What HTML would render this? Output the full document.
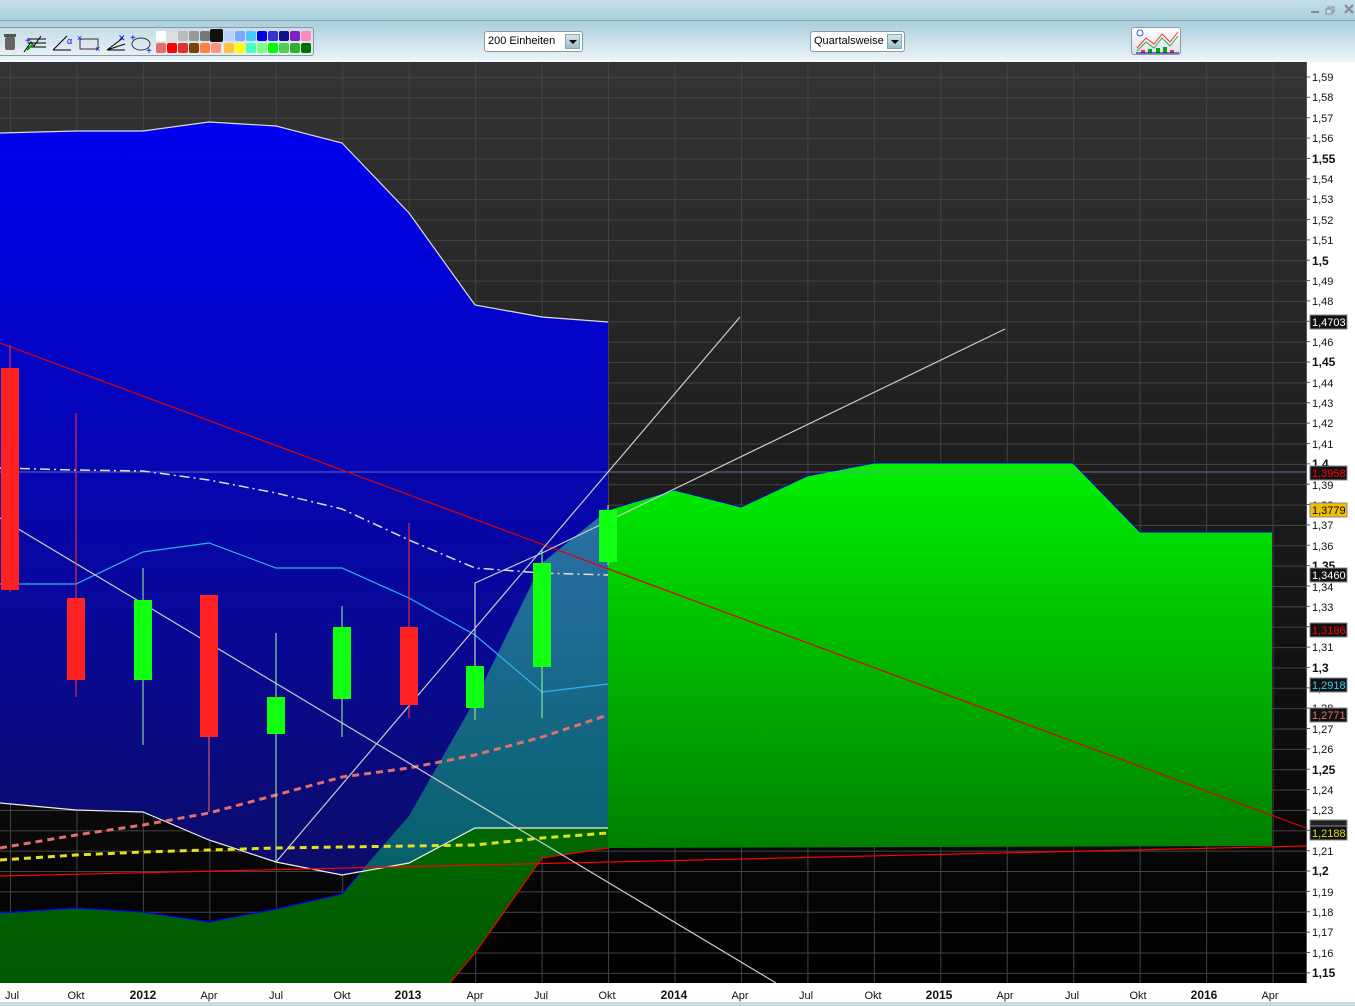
<!DOCTYPE html>
<html><head><meta charset="utf-8"><style>
*{margin:0;padding:0;box-sizing:border-box}
body{width:1355px;height:1006px;overflow:hidden;font-family:"Liberation Sans",Arial,sans-serif;background:#fff;position:relative}
#title{position:absolute;left:0;top:0;width:1355px;height:21px;background:linear-gradient(#c4dfea,#a9cddd);border-bottom:1px solid #8aa;}
#tb{position:absolute;left:0;top:21px;width:1355px;height:41px;background:linear-gradient(#a9cddd,#eef5f8);}
.dd{position:absolute;top:10px;height:21px;background:#fff;border:1px solid #8a9aa4;border-radius:3px;font-size:11px;line-height:19px;padding-left:3px;color:#000}
.dd i{position:absolute;right:2px;top:2px;width:15px;height:15px;background:linear-gradient(#d6e6ee,#9cbccc);border:1px solid #8aa}
.dd i:after{content:"";position:absolute;left:3px;top:5px;border-left:4px solid transparent;border-right:4px solid transparent;border-top:4px solid #000}
#pal{position:absolute;left:-2px;top:6px;width:316px;height:29px;border:1px solid #8a9aa4;border-radius:3px;background:linear-gradient(#c8dde6,#e6eff3)}
.sw{position:absolute;width:10px;height:10px;border-radius:2px}
svg{position:absolute;left:0;top:0}
</style></head><body>
<div id="title"><svg width="1355" height="21"><g fill="#889" stroke="#889"><rect x="1311" y="11" width="8" height="2" stroke="none"/><rect x="1328" y="7" width="6" height="5" fill="none"/><rect x="1326" y="9" width="6" height="5" fill="#c0dce8"/></g><path d="M1345 5 l8 8 M1353 5 l-8 8" stroke="#889" stroke-width="2"/></svg></div>
<div id="tb">
<div id="pal">
<svg width="316" height="29" style="left:0;top:0">
<g transform="translate(2,-6)">
<rect x="4" y="15" width="10" height="13" rx="2" fill="#666"/><rect x="3" y="12" width="12" height="3" fill="#555"/>
<path d="M23 30 L30 20 L33 24 L40 14 M27 17h18 M27 21h18 M27 25h18" stroke="#000" fill="none"/><path d="M26 28 l6 -6" stroke="#0a0" stroke-width="2"/><text x="24" y="22" fill="#00f" font-size="10">+</text>
<path d="M52 28 L66 14 M52 28 H70" stroke="#000" fill="none"/><text x="66" y="22" fill="#00f" font-size="9">α</text>
<rect x="79" y="17" width="18" height="10" fill="none" stroke="#333"/><text x="76" y="19" fill="#00f" font-size="9">×</text><text x="94" y="30" fill="#00f" font-size="9">×</text>
<path d="M106 28 L122 16 M106 28 H124 M106 28 L124 22" stroke="#000" fill="none"/><text x="117" y="19" fill="#00f" font-size="9">✕</text>
<ellipse cx="140" cy="22" rx="9" ry="6" fill="none" stroke="#333"/><text x="129" y="19" fill="#00f" font-size="10">+</text><text x="145" y="32" fill="#00f" font-size="10">+</text>
</g></svg>
<div class="sw" style="left:157px;top:3px;background:#fff"></div><div class="sw" style="left:168px;top:3px;background:#ddd"></div><div class="sw" style="left:179px;top:3px;background:#bbb"></div><div class="sw" style="left:190px;top:3px;background:#999"></div><div class="sw" style="left:201px;top:3px;background:#777"></div><div class="sw" style="left:211px;top:1px;width:13px;height:13px;background:#111"></div><div class="sw" style="left:225px;top:3px;background:#bcd0ff"></div><div class="sw" style="left:236px;top:3px;background:#7aa8ff"></div><div class="sw" style="left:247px;top:3px;background:#4cc8ff"></div><div class="sw" style="left:258px;top:3px;background:#0000ee"></div><div class="sw" style="left:269px;top:3px;background:#3535d0"></div><div class="sw" style="left:280px;top:3px;background:#101090"></div><div class="sw" style="left:291px;top:3px;background:#8020c0"></div><div class="sw" style="left:302px;top:3px;background:#ff88c0"></div>
<div class="sw" style="left:157px;top:15px;background:#e07070"></div><div class="sw" style="left:168px;top:15px;background:#f00"></div><div class="sw" style="left:179px;top:15px;background:#e03030"></div><div class="sw" style="left:190px;top:15px;background:#804000"></div><div class="sw" style="left:201px;top:15px;background:#ff8040"></div><div class="sw" style="left:212px;top:15px;background:#ff9080"></div><div class="sw" style="left:225px;top:15px;background:#ffc040"></div><div class="sw" style="left:236px;top:15px;background:#ff0"></div><div class="sw" style="left:247px;top:15px;background:#40ffc0"></div><div class="sw" style="left:258px;top:15px;background:#80ff80"></div><div class="sw" style="left:269px;top:15px;background:#0f0"></div><div class="sw" style="left:280px;top:15px;background:#50d050"></div><div class="sw" style="left:291px;top:15px;background:#30b030"></div><div class="sw" style="left:302px;top:15px;background:#007000"></div>
</div>
<div class="dd" style="left:484px;width:99px">200 Einheiten<i></i></div>
<div class="dd" style="left:810px;width:95px">Quartalsweise<i></i></div>
<div style="position:absolute;left:1131px;top:6px;width:50px;height:28px;border:1px solid #8a9aa4;border-radius:3px;background:linear-gradient(#fff,#dde)">
<svg width="50" height="28"><path d="M5 20 L14 10 L22 16 L30 6 L38 14 L46 4" stroke="#e33" fill="none"/><path d="M5 23 L14 14 L22 20 L30 10 L38 18 L46 8" stroke="#3a3" fill="none"/><rect x="9" y="22" width="4" height="3" fill="#e33"/><rect x="16" y="21" width="4" height="4" fill="#0a0"/><rect x="24" y="20" width="4" height="5" fill="#0a0"/><rect x="31" y="19" width="4" height="6" fill="#0a0"/><rect x="38" y="22" width="4" height="3" fill="#e33"/><path d="M4 25 H47" stroke="#00a"/><circle cx="8" cy="5" r="3" fill="none" stroke="#36c"/></svg></div>
</div>

<svg width="1355" height="1006" style="top:0">
<defs>
<linearGradient id="bg" x1="0" y1="0" x2="0" y2="1"><stop offset="0" stop-color="#343434"/><stop offset="1" stop-color="#000"/></linearGradient>
<linearGradient id="bl" x1="0" y1="0" x2="0" y2="1"><stop offset="0" stop-color="#0000f0"/><stop offset="1" stop-color="#0c0c6a"/></linearGradient>
<linearGradient id="gr" x1="0" y1="0" x2="0" y2="1"><stop offset="0" stop-color="#00f000"/><stop offset="1" stop-color="#008000"/></linearGradient>
<linearGradient id="gl" x1="0" y1="0" x2="0" y2="1"><stop offset="0" stop-color="#008800"/><stop offset="1" stop-color="#005800"/></linearGradient>
<linearGradient id="tl" x1="0" y1="0" x2="0" y2="1"><stop offset="0" stop-color="#2a70a8"/><stop offset="1" stop-color="#06606a"/></linearGradient>
<pattern id="gh" patternUnits="userSpaceOnUse" x="10" y="77" width="66.45" height="20.36"><path d="M0 0.5 H67 M0.5 0 V21" stroke="#444" stroke-width="1" fill="none"/></pattern>
<pattern id="tk" patternUnits="userSpaceOnUse" x="1306" y="76.5" width="10" height="20.36"><path d="M0 0.5 H4" stroke="#555" fill="none"/></pattern>
</defs>
<rect x="0" y="62" width="1306" height="921" fill="url(#bg)"/>
<rect x="0" y="62" width="1306" height="921" fill="url(#gh)"/>
<polygon points="0,913 76,908 143,912 209,922 276,909 342,894 409,816 475,700 542,563 608,510 608,848 542,858 475,953 450,983 0,983" fill="url(#gl)"/>
<polyline points="0,913 76,908 143,912 209,922 276,909 342,894 409,816 475,700 542,563 608,510" fill="none" stroke="#00f" stroke-width="1.2"/>
<polygon points="608,510 674,490 741,507 807,476 874,463 1073,463 1140,532 1272,532 1272,846 608,848" fill="url(#gr)"/>
<polyline points="608,510 674,490 741,507 807,476 874,463 1073,463 1140,532 1272,532" fill="none" stroke="#00c" stroke-width="1"/>
<polygon points="0,133 76,131 143,131 209,122 276,126 342,143 409,213 475,305 542,317 608,322 608,510 542,563 475,700 409,816 362,870 342,875 276,862 209,840 143,812 76,810 0,803" fill="url(#bl)"/>
<polygon points="608,510 542,563 475,700 409,816 362,870 409,863 475,828 608,828" fill="url(#tl)"/>
<polyline points="0,133 76,131 143,131 209,122 276,126 342,143 409,213 475,305 542,317 608,322" fill="none" stroke="#ddd" stroke-width="1.2"/>
<polyline points="0,803 76,810 143,812 209,840 276,862 342,875 409,863 475,828 608,828" fill="none" stroke="#eee" stroke-width="1.2"/>
<polyline points="450,983 475,953 542,858 608,848" fill="none" stroke="#e00" stroke-width="1.2"/>
<line x1="0" y1="472" x2="1306" y2="472" stroke="#8888c0" stroke-width="0.8"/>
<line x1="0" y1="343" x2="1306" y2="828" stroke="#e00000" stroke-width="1.2"/>
<line x1="0" y1="876" x2="1306" y2="846" stroke="#f00" stroke-width="1.2"/>
<polyline points="0,468 76,470 143,471 209,480 276,493 342,509 409,540 475,568 542,573 608,575" fill="none" stroke="#ddd" stroke-width="1.5" stroke-dasharray="10,4,2,4"/>
<polyline points="0,584 76,584 143,552 209,543 276,568 342,568 409,598 475,635 542,692 608,684" fill="none" stroke="#30b0f0" stroke-width="1.2"/>
<polyline points="0,848 76,835 143,825 209,813 276,795 342,777 409,768 475,755 542,737 608,715" fill="none" stroke="#e07070" stroke-width="3" stroke-dasharray="7,5"/>
<polyline points="0,860 76,855 143,852 209,850 276,848 342,847 409,846 475,845 542,838 608,833" fill="none" stroke="#e0e020" stroke-width="3" stroke-dasharray="7,5"/>
<g stroke="#ccc" stroke-width="1.2" fill="none">
<line x1="0" y1="518" x2="776" y2="983"/>
<line x1="276" y1="862" x2="740" y2="317"/>
<line x1="542" y1="553" x2="1005" y2="329"/>
<polyline points="475,665 475,583 542,553"/>
</g>
<g stroke-width="1">
<line x1="10" y1="345" x2="10" y2="592" stroke="#f33"/><rect x="1" y="368" width="18" height="222" fill="#f22"/>
<line x1="76" y1="413" x2="76" y2="697" stroke="#f33"/><rect x="67" y="598" width="18" height="82" fill="#f22"/>
<line x1="143" y1="568" x2="143" y2="745" stroke="#9f9"/><rect x="134" y="600" width="18" height="80" fill="#1f1"/>
<line x1="209" y1="595" x2="209" y2="812" stroke="#f66"/><rect x="200" y="595" width="18" height="142" fill="#f22"/>
<line x1="276" y1="633" x2="276" y2="862" stroke="#9f9"/><rect x="267" y="697" width="18" height="37" fill="#1f1"/>
<line x1="342" y1="606" x2="342" y2="737" stroke="#9f9"/><rect x="333" y="627" width="18" height="72" fill="#1f1"/>
<line x1="409" y1="523" x2="409" y2="718" stroke="#f33"/><rect x="400" y="627" width="18" height="78" fill="#f22"/>
<line x1="475" y1="660" x2="475" y2="720" stroke="#9f9"/><rect x="466" y="666" width="18" height="42" fill="#1f1"/>
<line x1="542" y1="550" x2="542" y2="718" stroke="#9f9"/><rect x="533" y="563" width="18" height="104" fill="#1f1"/>
<line x1="608" y1="505" x2="608" y2="565" stroke="#9f9"/><rect x="599" y="510" width="18" height="52" fill="#1f1"/>
</g>
<rect x="1306" y="62" width="49" height="944" fill="#fff"/>
<rect x="1306" y="62" width="8" height="921" fill="url(#tk)"/>
<line x1="1306.5" y1="62" x2="1306.5" y2="983" stroke="#555"/>
<rect x="0" y="983" width="1306" height="23" fill="#fff"/>
<rect x="0" y="1002" width="1355" height="4" fill="#c8dde6"/>
<g font-size="11" fill="#111">
<text x="1312" y="81">1,59</text><text x="1312" y="101">1,58</text><text x="1312" y="122">1,57</text><text x="1312" y="142">1,56</text><text x="1312" y="163" font-weight="bold" font-size="12">1,55</text><text x="1312" y="183">1,54</text><text x="1312" y="203">1,53</text><text x="1312" y="224">1,52</text><text x="1312" y="244">1,51</text><text x="1312" y="265" font-weight="bold" font-size="12">1,5</text><text x="1312" y="285">1,49</text><text x="1312" y="305">1,48</text><text x="1312" y="325">1,47</text><text x="1312" y="346">1,46</text><text x="1312" y="366" font-weight="bold" font-size="12">1,45</text><text x="1312" y="387">1,44</text><text x="1312" y="407">1,43</text><text x="1312" y="427">1,42</text><text x="1312" y="448">1,41</text><text x="1312" y="468" font-weight="bold" font-size="12">1,4</text><text x="1312" y="489">1,39</text><text x="1312" y="509">1,38</text><text x="1312" y="529">1,37</text><text x="1312" y="550">1,36</text><text x="1312" y="570" font-weight="bold" font-size="12">1,35</text><text x="1312" y="591">1,34</text><text x="1312" y="611">1,33</text><text x="1312" y="631">1,32</text><text x="1312" y="651">1,31</text><text x="1312" y="672" font-weight="bold" font-size="12">1,3</text><text x="1312" y="692">1,29</text><text x="1312" y="712">1,28</text><text x="1312" y="733">1,27</text><text x="1312" y="753">1,26</text><text x="1312" y="774" font-weight="bold" font-size="12">1,25</text><text x="1312" y="794">1,24</text><text x="1312" y="814">1,23</text><text x="1312" y="834">1,22</text><text x="1312" y="855">1,21</text><text x="1312" y="875" font-weight="bold" font-size="12">1,2</text><text x="1312" y="896">1,19</text><text x="1312" y="916">1,18</text><text x="1312" y="936">1,17</text><text x="1312" y="957">1,16</text><text x="1312" y="977" font-weight="bold" font-size="12">1,15</text>
</g>
<g font-size="11">
<rect x="1310" y="315" width="37" height="14" fill="#111" stroke="#889"/><text x="1312" y="326" fill="#fff">1,4703</text>
<rect x="1310" y="466" width="37" height="14" fill="#111" stroke="#889"/><text x="1312" y="477" fill="#f00">1,3958</text>
<rect x="1310" y="503" width="37" height="14" fill="#f0c000" stroke="#889"/><text x="1312" y="514" fill="#000">1,3779</text>
<rect x="1310" y="568" width="37" height="14" fill="#111" stroke="#889"/><text x="1312" y="579" fill="#fff">1,3460</text>
<rect x="1310" y="623" width="37" height="14" fill="#111" stroke="#889"/><text x="1312" y="634" fill="#f00">1,3186</text>
<rect x="1310" y="678" width="37" height="14" fill="#111" stroke="#889"/><text x="1312" y="689" fill="#3cf">1,2918</text>
<rect x="1310" y="708" width="37" height="14" fill="#111" stroke="#889"/><text x="1312" y="719" fill="#e07070">1,2771</text>
<rect x="1310" y="820" width="37" height="8" fill="#222" stroke="#889"/>
<rect x="1310" y="826" width="37" height="14" fill="#111" stroke="#889"/><text x="1312" y="837" fill="#dd2">1,2188</text>
</g>
<g font-size="11" fill="#111" text-anchor="middle">
<text x="12" y="999">Jul</text><text x="76" y="999">Okt</text><text x="143" y="999" font-weight="bold" font-size="12">2012</text><text x="209" y="999">Apr</text><text x="276" y="999">Jul</text><text x="342" y="999">Okt</text><text x="408" y="999" font-weight="bold" font-size="12">2013</text><text x="475" y="999">Apr</text><text x="541" y="999">Jul</text><text x="607" y="999">Okt</text><text x="674" y="999" font-weight="bold" font-size="12">2014</text><text x="740" y="999">Apr</text><text x="806" y="999">Jul</text><text x="873" y="999">Okt</text><text x="939" y="999" font-weight="bold" font-size="12">2015</text><text x="1005" y="999">Apr</text><text x="1072" y="999">Jul</text><text x="1138" y="999">Okt</text><text x="1204" y="999" font-weight="bold" font-size="12">2016</text><text x="1270" y="999">Apr</text>
</g>
</svg>
</body></html>
